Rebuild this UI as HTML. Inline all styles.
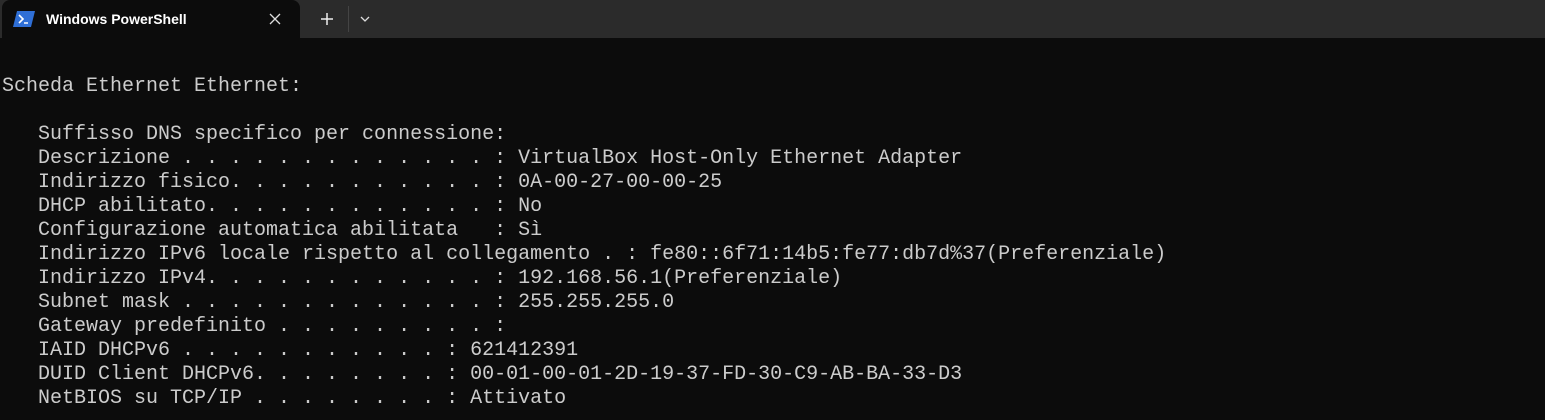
<!DOCTYPE html>
<html><head><meta charset="utf-8"><style>
body{margin:0;width:1545px;height:420px;background:#0c0c0c;overflow:hidden;position:relative;font-family:"Liberation Sans",sans-serif}
.bar{position:absolute;left:0;top:0;width:1545px;height:38px;background:#2b2b2b}
.tab{position:absolute;left:2px;top:0;width:298px;height:38px;background:#0c0c0c;border-radius:8px 8px 0 0}
.title{position:absolute;left:46px;top:11px;color:#fff;font-size:14px;font-weight:bold}
.sep{position:absolute;left:348px;top:6px;width:1px;height:26px;background:#444}
pre{position:absolute;left:2px;top:75px;margin:0;font-family:"Liberation Mono",monospace;font-size:20px;line-height:24px;color:#cccccc}
</style></head><body>
<div class="bar"></div>
<div class="tab"></div>
<svg style="position:absolute;left:13px;top:11px" width="22" height="16" viewBox="0 0 22 16"><polygon points="4,0 22,0 18,16 0,16" fill="#2f6fd6"/><path d="M6,4 L10,8 L6,12" stroke="#fff" stroke-width="1.6" fill="none"/><path d="M11,12 L15,12" stroke="#fff" stroke-width="1.5"/></svg>
<div class="title">Windows PowerShell</div>
<svg style="position:absolute;left:269px;top:13px" width="12" height="12"><path d="M1,1L11,11M11,1L1,11" stroke="#ddd" stroke-width="1.3"/></svg>
<svg style="position:absolute;left:320px;top:12px" width="14" height="14"><path d="M7,1V13M1,7H13" stroke="#eee" stroke-width="1.5"/></svg>
<div class="sep"></div>
<svg style="position:absolute;left:360px;top:16px" width="10" height="6"><path d="M1,1L5,5L9,1" stroke="#ddd" stroke-width="1.3" fill="none"/></svg>
<pre>Scheda Ethernet Ethernet:

   Suffisso DNS specifico per connessione:
   Descrizione . . . . . . . . . . . . . : VirtualBox Host-Only Ethernet Adapter
   Indirizzo fisico. . . . . . . . . . . : 0A-00-27-00-00-25
   DHCP abilitato. . . . . . . . . . . . : No
   Configurazione automatica abilitata   : Sì
   Indirizzo IPv6 locale rispetto al collegamento . : fe80::6f71:14b5:fe77:db7d%37(Preferenziale)
   Indirizzo IPv4. . . . . . . . . . . . : 192.168.56.1(Preferenziale)
   Subnet mask . . . . . . . . . . . . . : 255.255.255.0
   Gateway predefinito . . . . . . . . . :
   IAID DHCPv6 . . . . . . . . . . . : 621412391
   DUID Client DHCPv6. . . . . . . . : 00-01-00-01-2D-19-37-FD-30-C9-AB-BA-33-D3
   NetBIOS su TCP/IP . . . . . . . . : Attivato</pre>
</body></html>
